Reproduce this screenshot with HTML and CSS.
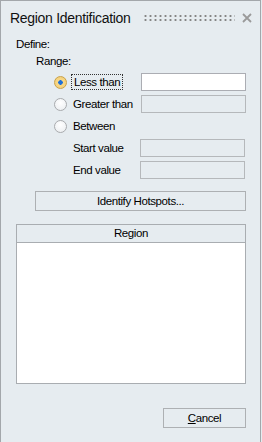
FILE: index.html
```html
<!DOCTYPE html>
<html lang="en">
<head>
    <meta charset="UTF-8">
    <meta name="viewport" content="width=device-width, initial-scale=1.0">
    <title>Region Identification</title>
    <link rel="stylesheet" href="styles.css">
</head>
<body>
    <div class="panel">
        <div class="titlebar">
            <span class="title">Region Identification</span>
            <span class="grip"></span>
            <svg class="close" width="10" height="10" viewBox="0 0 10 10">
                <path d="M1 1 L9 9 M9 1 L1 9" stroke="#9a9a9a" stroke-width="1.8" fill="none"/>
            </svg>
        </div>

        <div class="define">Define:</div>
        <div class="range">Range:</div>

        <div class="row first">
            <span class="radio checked"></span>
            <span class="opt"><span class="focus">Less than</span></span>
            <input type="text" class="field" />
        </div>
        <div class="row">
            <span class="radio"></span>
            <span class="opt">Greater than</span>
            <input type="text" class="field off" disabled />
        </div>
        <div class="row">
            <span class="radio"></span>
            <span class="opt">Between</span>
        </div>
        <div class="row value">
            <span class="vlabel">Start value</span>
            <input type="text" class="field off" disabled />
        </div>
        <div class="row value">
            <span class="vlabel">End value</span>
            <input type="text" class="field off" disabled />
        </div>

        <button class="btn identify">Identify Hotspots...</button>

        <div class="table">
            <div class="thead">Region</div>
            <div class="tbody"></div>
        </div>

        <div class="footer">
            <button class="btn cancel"><u>C</u>ancel</button>
        </div>
    </div>
</body>
</html>
```

FILE: styles.css
```css
* {
    box-sizing: border-box;
    font-family: 'Liberation Sans', Arial, sans-serif;
}
body {
    margin: 0;
    background-color: #e6ecf0;
}
.panel {
    width: 261px;
    height: 442px;
    border: 1px solid #a3a7ab;
    border-bottom: none;
    background-color: #e6ecf0;
    font-size: 11.5px;
    letter-spacing: -0.4px;
    color: #000;
    white-space: nowrap;
}
.titlebar {
    display: flex;
    align-items: center;
    height: 32px;
    padding: 2px 8px 0 9px;
}
.title {
    font-size: 14px;
    letter-spacing: -0.3px;
    color: #111;
}
.grip {
    width: 92px;
    height: 8px;
    margin-left: auto;
    margin-right: 7px;
    background-image: radial-gradient(circle, #858585 1px, transparent 1.2px);
    background-size: 5px 4px;
}
.close {
    display: block;
}
.define {
    margin: 5px 0 0 15px;
    height: 16px;
}
.range {
    margin: 1px 0 0 35px;
    height: 16px;
}
.row {
    display: flex;
    align-items: center;
    height: 22px;
    padding-left: 53px;
}
.radio {
    width: 13px;
    height: 13px;
    border-radius: 50%;
    border: 1px solid #a9abae;
    background: radial-gradient(circle at 50% 35%, #ffffff, #e9ecef);
    flex: none;
}
.radio.checked {
    border-color: #c9a24a;
    background: radial-gradient(circle, #1e6fd6 0, #1e6fd6 2px, #f7d88a 2.5px, #f3cd70);
}
.opt {
    width: 74px;
    padding-left: 6px;
}
.focus {
    outline: 1px dotted #333;
    outline-offset: 1px;
    padding: 0 1px;
}
.field {
    width: 105px;
    height: 18px;
    border: 1px solid #abadb3;
    background: #fff;
    margin: 0;
}
.field.off {
    background: #e6ecf0;
    border-color: #b5b8bb;
}
.value {
    padding-left: 72px;
}
.vlabel {
    width: 67px;
}
.btn {
    font-size: 11.5px;
    letter-spacing: -0.4px;
    color: #000;
    background: #e6ecf0;
    border: 1px solid #adb0b3;
    height: 20px;
    padding: 0;
}
.identify {
    display: block;
    width: 211px;
    margin: 10px 0 0 34px;
}
.table {
    width: 230px;
    height: 160px;
    margin: 13px 0 0 15px;
    border: 1px solid #a9adb1;
    display: flex;
    flex-direction: column;
}
.thead {
    height: 18px;
    border-bottom: 1px solid #a9adb1;
    text-align: center;
    line-height: 17px;
}
.tbody {
    flex: 1;
    background: #fff;
}
.footer {
    display: flex;
    justify-content: flex-end;
    padding-right: 14px;
    margin-top: 24px;
}
.cancel {
    width: 83px;
}
```
